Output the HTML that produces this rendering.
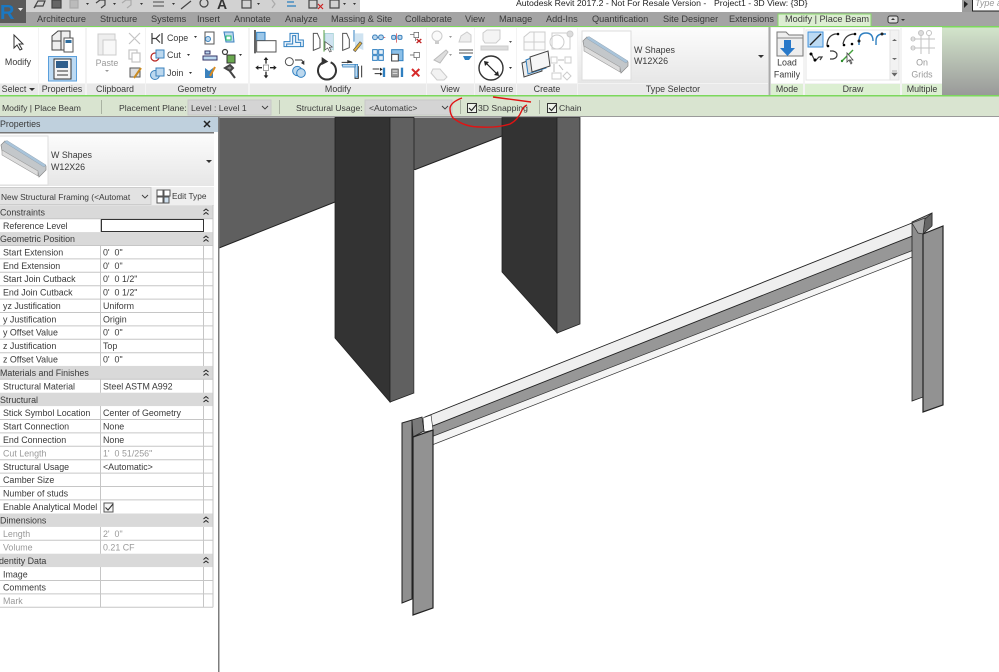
<!DOCTYPE html>
<html><head><meta charset="utf-8"><title>Revit</title>
<style>
html,body{margin:0;padding:0;background:#fff;width:999px;height:672px;overflow:hidden}
svg{display:block;filter:blur(.3px)}
text{font-family:"Liberation Sans",sans-serif;font-size:8.9px;fill:#3a3a3a;white-space:pre}
.tabs text{font-size:9.2px}
.opt text{font-size:8.65px}
.g{fill:#9a9a9a}.m{text-anchor:middle}
.i{fill:none;stroke:#3c3c3c;stroke-width:1.2}
.b{fill:none;stroke:#2f7fc0;stroke-width:1.4}
.f{fill:#bcd8ee;stroke:#3b82bd;stroke-width:1}
.l{fill:none;stroke:#c4c4c4;stroke-width:1.2}
</style></head><body>
<svg width="999" height="672" viewBox="0 0 999 672" xmlns="http://www.w3.org/2000/svg">
<defs>
<linearGradient id="rg" x1="0" y1="0" x2="0" y2="1"><stop offset="0" stop-color="#d4e6cc"/><stop offset="1" stop-color="#989898"/></linearGradient>
<linearGradient id="sel" x1="0" y1="0" x2="0" y2="1"><stop offset="0" stop-color="#fcfcfc"/><stop offset="1" stop-color="#e6e6e6"/></linearGradient>
<g id="beam">
<path d="M1 6 L5 2 L46 27 L46 31 L39 38 L38 33 L2 12 Z" fill="#c3c7ca" stroke="#888" stroke-width=".7"/>
<path d="M4 3 L7 1.500 L46 26 L44 28 Z" fill="#a9c4da" stroke="#8a9aa8" stroke-width=".4"/>
<path d="M2 11 L38 32 L38 37 L2 16 Z" fill="#dcdcdc" stroke="#999" stroke-width=".6"/>
</g>
</defs>

<!-- top bar -->
<rect width="999" height="12" fill="#d2d2d2"/>
<rect x="360" width="602" height="12" fill="#fff"/>
<rect x="962" width="37" height="12" fill="#9c9c9c"/>
<rect x="972.500" y="-1" width="30" height="12" fill="#fff" stroke="#222"/>
<path d="M964 1 L968 4 L964 8 Z" fill="#222"/>
<text x="975" y="6" style="font-size:9px;font-style:italic" class="g">Type a</text>
<text x="516" y="6" style="font-size:8.7px;fill:#222">Autodesk Revit 2017.2 - Not For Resale Version -</text>
<text x="714" y="6" style="font-size:8.7px;fill:#222">Project1 - 3D View: {3D}</text>
<!-- QAT icons -->
<g fill="none" stroke="#444" stroke-width="1.2">
<path d="M34 8 L38 1 H45 L43 6 H36Z"/><rect x="52" y="0" width="9" height="8" fill="#666"/>
<path d="M70 0 h8 v8 h-8z" stroke="#aaa" fill="#bbb"/><path d="M96 3 l4 -3 h5 v5 l-4 3" />
<path d="M122 3 l4 -3 h5 v5 l-4 3" stroke="#aaa"/><path d="M153 2 h11 M153 6 h11" stroke="#777" stroke-width="1.6"/>
<path d="M181 9 L191 1" /><circle cx="204" cy="3" r="4"/>
<rect x="242" y="0" width="9" height="8"/><path d="M272 0 l3 4 -3 4" stroke="#aaa"/>
<path d="M287 2 h7 M287 6 h9" stroke="#2a7fc0"/><path d="M309 0 h8 v8 h-8z" /><path d="M318 4 l5 5 M323 4 l-5 5" stroke="#c22"/><rect x="330" y="0" width="9" height="8" />
</g>
<text x="217" y="9" style="font-size:14px;font-weight:bold;fill:#333">A</text>
<path d="M86 3h3l-1.500 2z M113 3h3l-1.500 2z M140 3h3l-1.500 2z M172 3h3l-1.500 2z M257 3h3l-1.500 2z M343 3h3l-1.500 2z M353 3h3l-1.500 2z" fill="#333"/>

<!-- tabs -->
<rect y="12" width="999" height="14" fill="#a4a4a4"/>
<rect x="0" y="0" width="26" height="23" fill="#5a5a5a"/>
<text x="0" y="19" style="font-size:20px;font-weight:bold;fill:#1a78c2">R</text>
<path d="M18 8h5l-2.500 3z" fill="#eee"/>
<g class="tabs">
<text x="37" y="22">Architecture</text>
<text x="100" y="22">Structure</text><text x="151" y="22">Systems</text><text x="197" y="22">Insert</text>
<text x="234" y="22">Annotate</text><text x="285" y="22">Analyze</text><text x="331" y="22">Massing &amp; Site</text>
<text x="405" y="22">Collaborate</text><text x="465" y="22">View</text><text x="499" y="22">Manage</text>
<text x="546" y="22">Add-Ins</text><text x="592" y="22">Quantification</text><text x="663" y="22">Site Designer</text>
<text x="729" y="22">Extensions</text>
<path d="M778 27 V14 H871 V27" fill="#dcedd2" stroke="#86d868" stroke-width="1"/>
<text x="785" y="22">Modify | Place Beam</text>
</g>
<rect x="888" y="16" width="10" height="7" rx="2" fill="#ddd" stroke="#333"/><path d="M891 20h4l-2 -2z" fill="#333"/><path d="M901 19h4l-2 2z" fill="#333"/>

<!-- ribbon -->
<rect y="26" width="999" height="70" fill="url(#rg)"/>
<rect y="26" width="999" height="1.500" fill="#7cd85c"/>
<rect y="27" width="942" height="68" fill="#f3f3f3"/>
<g fill="#fff">
<rect x="0" y="28" width="38" height="55"/><rect x="39" y="28" width="46" height="55"/><rect x="87" y="28" width="58" height="55"/><rect x="146" y="28" width="102" height="55"/><rect x="250" y="28" width="176" height="55"/><rect x="427" y="28" width="47" height="55"/><rect x="475" y="28" width="41" height="55"/><rect x="517" y="28" width="60" height="55"/><rect x="578" y="28" width="190" height="55"/><rect x="771" y="28" width="32" height="55"/><rect x="805" y="28" width="95" height="55"/><rect x="902" y="28" width="40" height="55"/>
</g>
<g fill="#e9e9e9">
<rect x="0" y="84" width="38" height="11"/><rect x="39" y="84" width="46" height="11"/><rect x="87" y="84" width="58" height="11"/><rect x="146" y="84" width="102" height="11"/><rect x="250" y="84" width="176" height="11"/><rect x="427" y="84" width="47" height="11"/><rect x="475" y="84" width="41" height="11"/><rect x="517" y="84" width="60" height="11"/><rect x="578" y="84" width="190" height="11"/>
</g>
<g fill="#dcefd2"><rect x="771" y="84" width="32" height="11"/><rect x="805" y="84" width="95" height="11"/><rect x="902" y="84" width="40" height="11"/></g>
<rect x="768.500" y="27" width="2" height="68" fill="#aaa"/>
<rect y="95" width="999" height="1.500" fill="#7cd85c"/>
<g>
<text x="14" y="92" text-anchor="middle">Select</text><path d="M29 88h6l-3 3z" fill="#333"/>
<text x="62" y="92" text-anchor="middle">Properties</text><text x="115" y="92" text-anchor="middle">Clipboard</text>
<text x="197" y="92" text-anchor="middle">Geometry</text><text x="338" y="92" text-anchor="middle">Modify</text>
<text x="450" y="92" text-anchor="middle">View</text><text x="496" y="92" text-anchor="middle">Measure</text>
<text x="547" y="92" text-anchor="middle">Create</text><text x="673" y="92" text-anchor="middle">Type Selector</text>
<text x="787" y="92" text-anchor="middle">Mode</text><text x="853" y="92" text-anchor="middle">Draw</text><text x="922" y="92" text-anchor="middle">Multiple</text>
</g>

<!-- select / properties / clipboard -->
<path d="M14 35 V48 L17 45 L20 50 L22 49 L19 44 L23 44 Z" fill="#fff" stroke="#333"/>
<text x="18" y="65" text-anchor="middle">Modify</text>
<path d="M52 36 L58 31 H70 V50 H52Z" fill="#eee" stroke="#444"/><path d="M61 31 V50 M52 41 H61" stroke="#444" fill="none"/>
<rect x="64" y="38" width="9" height="14" fill="#fff" stroke="#555"/><rect x="65.500" y="40" width="6" height="3" fill="#2f6d9e"/>
<rect x="48.500" y="56.500" width="28" height="24.500" fill="#bcdaf3" stroke="#5a9fdc"/>
<rect x="54" y="59" width="17" height="20" fill="#f4f4f4" stroke="#333"/><rect x="56" y="61" width="12" height="7" fill="#305f8c"/>
<path d="M57 71h11M57 75h11" stroke="#333"/>
<rect x="98" y="34" width="17" height="21" fill="#eee" stroke="#ccc"/><rect x="103" y="40" width="13" height="15" fill="#f8f8f8" stroke="#ccc"/>
<text x="107" y="66" text-anchor="middle" class="g">Paste</text><path d="M105 70h4l-2 2z" fill="#999"/>
<path d="M129 33l11 11M140 33l-11 11" class="l"/><rect x="129" y="50" width="8" height="9" class="l"/><rect x="132" y="53" width="8" height="9" class="l" style="fill:#fff"/>
<rect x="130" y="68" width="10" height="9" fill="#ddd" stroke="#555"/><path d="M134 78 L141 68" stroke="#c98b21" stroke-width="2"/>

<!-- geometry -->
<path d="M152 33v11M162 33v11M152 38.500h4l4 -4M152 38.500h4l4 4" class="i"/>
<circle cx="155" cy="57" r="4" fill="#fff" stroke="#b8231f" stroke-width="1.2"/><rect x="156" y="50" width="8" height="8" class="f"/>
<circle cx="155" cy="75" r="4.500" class="f"/><rect x="156" y="68" width="8" height="8" class="f"/>
<text x="167" y="41">Cope</text><path d="M194 36h3l-1.500 2z" fill="#333"/>
<text x="167" y="58">Cut</text><path d="M187 54h3l-1.500 2z" fill="#333"/>
<text x="167" y="76">Join</text><path d="M189 72h3l-1.500 2z" fill="#333"/>
<rect x="205" y="32" width="9" height="12" fill="#fff" stroke="#555"/><circle cx="208" cy="39" r="2.500" class="f"/>
<path d="M224 32h9l1 10h-8z" class="f"/><rect x="226" y="36" width="5" height="4" fill="#fff" stroke="#2b6"/>
<path d="M205 51h5v3h-5zM203 56h14v4h-14z" fill="#bcd8ee" stroke="#336"/>
<circle cx="225" cy="52" r="2.500" class="i"/><rect x="227" y="55" width="8" height="8" fill="#6aa84f" stroke="#333"/><path d="M239 54h3l-1.500 2z" fill="#333"/>
<path d="M205 78V68l4 3 4 -3v10z" fill="#3b82bd"/><path d="M210 76L215 67" stroke="#d98b20" stroke-width="2"/>
<path d="M225 68l5 -3 3 3 -3 3zM229 70l6 8" stroke="#444" stroke-width="2" fill="#888"/>

<!-- modify -->
<g transform="translate(240 25) scale(.3333)">
<path d="M45 15V85" stroke="#444" stroke-width="5"/><rect x="50" y="22" width="25" height="25" fill="#9cc7e8" stroke="#2f7fc0" stroke-width="3"/><rect x="50" y="47" width="58" height="34" fill="#fff" stroke="#555" stroke-width="3"/>
<path d="M132 65 V50 H150 V25 H175 V45 H190 V65Z M140 65V57H158V32H167V52H182V65" fill="#eef5fb" stroke="#2f7fc0" stroke-width="3"/>
<path d="M220 25h12l8 18v25l-20 8z" fill="#fff" stroke="#555" stroke-width="3"/><path d="M252 15V80" stroke="#5aa04a" stroke-width="3"/><path d="M255 25l25 0v50l-25 -10z" fill="#cfe3f1" stroke="#9cc" stroke-width="2"/><path d="M255 50v25l8 -6 6 12 5 -2 -6 -12 9 -1z" fill="#fff" stroke="#444" stroke-width="2"/>
<path d="M308 25h12l8 18v25l-20 8z" fill="#fff" stroke="#555" stroke-width="3"/><path d="M342 15V50" stroke="#2f7fc0" stroke-width="3"/><path d="M345 25l25 0v50l-25 -10z" fill="#cfe3f1"/><path d="M340 75l20 -25 6 5 -20 25z" fill="#e3b23c" stroke="#555" stroke-width="2"/>
<path d="M78 100v16M78 140v16M50 128h16M90 128h16" stroke="#222" stroke-width="4"/><path d="M78 96l-7 9h14zM78 160l-7 -9h14zM46 128l9 -7v14zM110 128l-9 -7v14z" fill="#222"/><rect x="70" y="120" width="16" height="16" fill="#fff" stroke="#777" stroke-width="2"/>
<circle cx="148" cy="110" r="12" fill="#fff" stroke="#555" stroke-width="3"/><circle cx="172" cy="138" r="14" fill="#bcd8ee" stroke="#2f7fc0" stroke-width="3"/><circle cx="183" cy="144" r="13" fill="#bcd8ee" stroke="#2f7fc0" stroke-width="3"/><path d="M165 105h20l6 8" fill="none" stroke="#333" stroke-width="3"/><path d="M193 106v14l-10 -6z" fill="#333"/>
<path d="M250 112 A27 27 0 1 0 272 112" fill="none" stroke="#333" stroke-width="6"/><path d="M245 96l20 14 -20 10z" fill="#333"/>
<path d="M305 112h32M305 120h40M345 125h10v35h-10zM365 122v35" fill="none" stroke="#333" stroke-width="3"/><path d="M322 105l15 5 -15 5z" fill="#333"/><path d="M308 118h38v8h-38zM345 118h8v38h-8z" fill="#bcd8ee" stroke="#2f7fc0" stroke-width="2"/>
<path d="M396 38h40" stroke="#c33" stroke-width="2"/><rect x="398" y="30" width="14" height="14" rx="6" class="f" style="stroke-width:3"/><rect x="416" y="30" width="14" height="14" rx="6" class="f" style="stroke-width:3"/>
<path d="M470 25v28" stroke="#c33" stroke-width="2"/><rect x="455" y="31" width="12" height="12" rx="4" class="f" style="stroke-width:3"/><rect x="474" y="31" width="12" height="12" rx="4" class="f" style="stroke-width:3"/>
<rect x="522" y="22" width="14" height="16" fill="#fff" stroke="#555" stroke-width="2"/><path d="M510 28h12M527 38v10" stroke="#555" stroke-width="2"/><path d="M530 42l14 12M544 42l-14 12" stroke="#c02222" stroke-width="4"/>
<path d="M398 74h14v14h-14zM416 74h14v14h-14zM398 92h14v14h-14zM416 92h14v14h-14z" fill="#e6f0f8" stroke="#2f7fc0" stroke-width="3"/>
<rect x="455" y="74" width="34" height="33" fill="#8cc0e8" stroke="#2f7fc0" stroke-width="3"/><rect x="455" y="88" width="20" height="20" fill="#fff" stroke="#444" stroke-width="3"/>
<rect x="522" y="82" width="16" height="16" fill="#fff" stroke="#555" stroke-width="2"/><path d="M510 90h12M530 98v8" stroke="#555" stroke-width="2"/>
<path d="M398 132h20M404 146h16" stroke="#333" stroke-width="3"/><path d="M432 128v28" stroke="#2f7fc0" stroke-width="7"/><path d="M420 128l8 5 -8 5zM420 142l8 5 -8 5z" fill="#222"/>
<rect x="455" y="132" width="20" height="24" fill="#999" stroke="#444" stroke-width="2"/><path d="M458 138h14M458 146h14" stroke="#fff" stroke-width="2"/><path d="M486 128v28" stroke="#2f7fc0" stroke-width="7"/>
<path d="M516 132l22 22M538 132l-22 22" stroke="#d62a2a" stroke-width="6"/>
</g>

<!-- view -->
<circle cx="437" cy="36" r="5" fill="#fafafa" stroke="#ccc"/><rect x="435" y="41" width="4" height="3" fill="#ccc"/><path d="M449 36h3l-1.500 2z" fill="#999"/>
<path d="M459 42l2 -6 6 -4 4 3v7h-10z" fill="#eee" stroke="#ccc"/>
<path d="M434 60L446 50l2 2 -8 11z" fill="#ddd" stroke="#bbb"/><path d="M449 54h3l-1.500 2z" fill="#999"/>
<path d="M459 50h14M459 53h14" stroke="#555"/><path d="M463 56h9l-3 4h-4z" fill="#2f7fc0"/>
<path d="M433 69h7l7 8 -3 3h-7l-6 -7z" fill="#f2f2f2" stroke="#ccc"/>
<!-- measure -->
<path d="M483 40V33l4 -3h13v9l-4 4h-11z" fill="#f4f4f4" stroke="#ccc"/><rect x="481" y="46" width="27" height="4" fill="#ddd" stroke="#ccc"/><path d="M509 41h3l-1.500 2z" fill="#555"/>
<circle cx="491" cy="68" r="12" fill="#fff" stroke="#333" stroke-width="1.400"/><path d="M485 62l13 13" stroke="#222" stroke-width="1.200"/><path d="M484 61l5 1 -4 4zM499 76l-5 -1 4 -4z" fill="#222"/><path d="M509 67h3l-1.500 2z" fill="#333"/>
<!-- create -->
<path d="M524 37l6 -5h15v18h-21z" fill="#fbfbfb" stroke="#ccc"/><path d="M534 32v18M524 42h21" stroke="#ccc"/>
<circle cx="557" cy="42" r="7" fill="#fff" stroke="#ccc"/><path d="M552 33h18v16h-18z" fill="none" stroke="#ccc"/><circle cx="570" cy="34" r="3" fill="#ddd" stroke="#ccc"/>
<path d="M522 63l18 -7 2 15 -18 6z" fill="#eee" stroke="#444"/><path d="M526 60l18 -7 2 15 -18 6z" fill="#ddd" stroke="#2f7fc0"/><path d="M530 57l18 -6 2 15 -18 6z" fill="#f6f6f6" stroke="#444"/>
<g fill="#fff" stroke="#ccc"><rect x="551" y="57" width="6" height="6"/><rect x="565" y="57" width="6" height="6"/><rect x="552" y="73" width="9" height="6"/><path d="M567 72l4 4 -4 4 -4 -4z"/></g><path d="M558 60h6M554 64v8M559 65l4 5" stroke="#bbb"/>
<!-- type selector -->
<rect x="578" y="28" width="190" height="55" fill="url(#sel)"/>
<rect x="582" y="31" width="49" height="49" fill="#fff" stroke="#ddd"/>
<use href="#beam" x="582" y="35"/>
<text x="634" y="53">W Shapes</text><text x="634" y="64">W12X26</text>
<path d="M758 55h6l-3 3z" fill="#333"/>
<!-- mode -->
<path d="M777 32h9l3 3h14v21h-26z" fill="#eee" stroke="#777"/><path d="M777 38h26" stroke="#888"/>
<path d="M784 40h7v8h4l-7.500 8 -7.500 -8h4z" fill="#2979c9"/>
<text x="787" y="65.500" text-anchor="middle">Load</text><text x="787" y="77.500" text-anchor="middle">Family</text>
<!-- draw -->
<rect x="806" y="30" width="92" height="50" fill="#fff" stroke="#e4e4e4"/>
<rect x="808" y="32" width="15" height="15" fill="#bcdaf3" stroke="#3e8fd8"/><path d="M810 45L821 34" stroke="#222" stroke-width="1.300"/>
<path d="M827 46q0 -10 8 -12h4" class="i"/><circle cx="828" cy="46" r="1.300"/><circle cx="838" cy="34" r="1.300"/>
<path d="M843 44q2 -10 12 -10" class="i"/><circle cx="844" cy="45" r="1.300"/><circle cx="855" cy="34" r="1.300"/><circle cx="852" cy="44" r="1.300"/>
<path d="M859 45v-4q0 -8 7 -8t7 8" class="b"/><circle cx="859" cy="41" r="1.500" fill="#222"/>
<path d="M876 45v-4q0 -7 7 -7h3" class="b"/><circle cx="882" cy="34" r="1.500" fill="#222"/>
<path d="M811 53l4 8 4 -4 3 0 -2 3" class="i"/><circle cx="811" cy="54" r="1.500"/><circle cx="815" cy="60" r="1.500"/>
<path d="M830 51h3q4 1 4 4t-4 4h-3" class="i"/>
<path d="M842 61L853 50" stroke="#41a03a" stroke-width="1.400"/><circle cx="842" cy="61" r="1.200" fill="#2a8a2a"/><path d="M847 53v9l2 -2 2 4 1 -1 -2 -3 3 0z" fill="#fff" stroke="#444" stroke-width=".8"/>
<rect x="890" y="30" width="9" height="50" fill="#f2f2f2" stroke="#e2e2e2"/><path d="M892 41h5l-2.500 -2z M892 58h5l-2.500 2z" fill="#666"/><path d="M892 73h5l-2.500 3zM892 71h5" fill="#666" stroke="#666" stroke-width=".6"/>
<!-- multiple -->
<g stroke="#c2c2c2" fill="none"><path d="M911 39h24M911 48h24M921 36v18M929 36v18"/><circle cx="921" cy="33" r="2.500" fill="#ddd"/><circle cx="929" cy="33" r="2.500"/><circle cx="913" cy="39" r="2"/><circle cx="913" cy="48" r="2"/></g>
<text x="922" y="65.500" text-anchor="middle" class="g">On</text><text x="922" y="77.500" text-anchor="middle" class="g">Grids</text>

<!-- options bar -->
<rect y="96.500" width="999" height="20.500" fill="#d9e4d0"/>
<rect y="116" width="999" height="1.500" fill="#9a9a9a"/>
<g class="opt">
<text x="2" y="111">Modify | Place Beam</text>
<path d="M101.500 100v14M279.500 100v14M460.500 100v14M539.500 100v14" stroke="#a9b2a2"/>
<text x="119" y="111">Placement Plane:</text>
<rect x="188" y="100" width="83" height="15" fill="#d4d4d4" stroke="#c8c8c8"/><text x="191" y="111">Level : Level 1</text><path d="M262 106l3 3 3 -3" fill="none" stroke="#3c3c3c" stroke-width=".9"/>
<text x="296" y="111">Structural Usage:</text>
<rect x="365" y="100" width="87" height="15" fill="#d4d4d4" stroke="#c8c8c8"/><text x="369" y="111">&lt;Automatic&gt;</text><path d="M442 106l3 3 3 -3" fill="none" stroke="#3c3c3c" stroke-width=".9"/>
<rect x="467.500" y="103.500" width="9" height="9" fill="#eef2ea" stroke="#333"/><path d="M469 108l2.500 2.500 5 -6" fill="none" stroke="#222" stroke-width="1.100"/>
<text x="478" y="111">3D Snapping</text>
<rect x="547.500" y="103.500" width="9" height="9" fill="#eef2ea" stroke="#333"/><path d="M549 108l2.500 2.500 5 -6" fill="none" stroke="#222" stroke-width="1.100"/>
<text x="559" y="111">Chain</text>
</g>

<!-- 3D view -->
<rect x="219" y="117" width="780" height="555" fill="#fff"/>
<path d="M219 117.500H502V136L414 170 V117 H335 V202 L219 248Z" fill="#5f5f5f"/>
<path d="M219 248L335 202M414 170L502 136" stroke="#222" stroke-width="1" fill="none"/>
<path d="M335 117.500H390V402L335 338Z" fill="#333" stroke="#222" stroke-width=".8"/>
<path d="M390 117.500H414V393L390 402Z" fill="#606060" stroke="#222" stroke-width=".8"/>
<path d="M502 117.500H557V333L502 272Z" fill="#333" stroke="#222" stroke-width=".8"/>
<path d="M557 117.500H580V324L557 333Z" fill="#606060" stroke="#222" stroke-width=".8"/>
<path d="M414.500 170V393" stroke="#ccc"/>

<!-- beam -->
<path d="M430 427L918 233L919 248L433 438Z" fill="#979797" stroke="#333" stroke-width=".7"/>
<path d="M425 417L912 223L920 233L430 427Z" fill="#efefef" stroke="#222" stroke-width=".9"/>
<path d="M431 437L919 248L920 254L432 445Z" fill="#f4f4f4" stroke="#333" stroke-width=".7"/>
<!-- left column -->
<path d="M423 418L431 415L433 430L424 432Z" fill="#fff" stroke="#222" stroke-width=".6"/>
<path d="M402 423L412 420V599L402 603Z" fill="#8f8f8f" stroke="#222" stroke-width="1"/>
<path d="M412 420L422 417L424 431L413 437Z" fill="#7a7a7a" stroke="#222" stroke-width=".8"/>
<path d="M413 437L433 430V608L413 615Z" fill="#929292" stroke="#222" stroke-width="1.200"/>
<!-- right column -->
<path d="M912 222L932 213V225L923 234V397L912 401Z" fill="#8d8d8d" stroke="#222" stroke-width=".8"/>
<path d="M923 234L925 219L932 213V226Z" fill="#666" stroke="#222" stroke-width=".7"/>
<path d="M912 223L925 218L923 234L918 233Z" fill="#a8a8a8" stroke="#333" stroke-width=".7"/>
<path d="M923 234L943 226V405L923 412Z" fill="#929292" stroke="#222" stroke-width="1.200"/>

<!-- red ellipse -->
<path d="M493 97L531 102M462 98Q451 102 450 108Q450 117 456 120Q466 127 480 127Q497 128 510 124Q518 120 522 110Q524 106 527 105" fill="none" stroke="#e01313" stroke-width="1.400"/>

<!-- properties panel -->
<rect y="117" width="218" height="555" fill="#fff"/>
<rect x="218" y="117" width="1.500" height="555" fill="#7d7d7d"/>
<rect y="117" width="218" height="15" fill="#bfd0dd"/>
<rect y="132" width="214" height="1.500" fill="#777"/>
<text x="0" y="127">Properties</text>
<path d="M204 121l6 6M210 121l-6 6" stroke="#222" stroke-width="1.500"/>
<rect y="134" width="214" height="52" fill="url(#sel)"/>
<rect x="-1" y="136" width="49" height="49" fill="#fff" stroke="#ddd"/>
<use href="#beam" x="0" y="139" />
<text x="51" y="158">W Shapes</text><text x="51" y="170">W12X26</text>
<path d="M206 160h6l-3 3z" fill="#333"/>
<rect y="187" width="214" height="19" fill="#efefef"/>
<rect x="-1" y="187.500" width="152" height="17" fill="#e2e2e2" stroke="#ccc"/>
<text x="1" y="200" style="font-size:8.4px">New Structural Framing (&lt;Automat</text><path d="M142 195l3 3 3 -3" fill="none" stroke="#3c3c3c" stroke-width=".9"/>
<g fill="#fff" stroke="#555"><rect x="157" y="190" width="6" height="6"/><rect x="164" y="190" width="6" height="6"/><rect x="157" y="197" width="6" height="6"/><rect x="164" y="197" width="5" height="6" fill="#cfe0ee"/></g>
<text x="172" y="199" style="font-size:8.3px">Edit Type</text>

<!-- table -->
<g fill="#d9d9d9">
<rect y="205.300" width="213" height="13.400"/><rect y="232.100" width="213" height="13.400"/><rect y="365.900" width="213" height="13.400"/><rect y="392.700" width="213" height="13.400"/><rect y="513.500" width="213" height="13.400"/><rect y="553.700" width="213" height="13.400"/>
</g>
<g stroke="#c6c6c6" stroke-width="1">
<path d="M0 218.700H213M0 245.500H213M0 258.900H213M0 272.300H213M0 285.700H213M0 299.100H213M0 312.500H213M0 325.900H213M0 339.300H213M0 352.700H213M0 379.300H213M0 419.500H213M0 432.900H213M0 446.300H213M0 459.700H213M0 473.100H213M0 486.500H213M0 499.900H213M0 540.300H213M0 580.500H213M0 593.900H213M0 607.300H213"/>
<path d="M100.500 218.700V232M100.500 245.500V366M100.500 379.300V392.700M100.500 406V513.500M100.500 527V553.700M100.500 567V607.300"/>
<path d="M203.500 218.700V232M203.500 245.500V366M203.500 379.300V392.700M203.500 406V513.500M203.500 527V553.700M203.500 567V607.300"/>
<path d="M213 205V607.300"/>
</g>
<rect x="101.500" y="219.500" width="102" height="12" fill="#fff" stroke="#333"/>
<g>
<text x="0" y="215.500">Constraints</text><text x="3" y="229">Reference Level</text>
<text x="0" y="242">Geometric Position</text>
<text x="3" y="255.500">Start Extension</text><text x="103" y="255.500">0'  0"</text>
<text x="3" y="269">End Extension</text><text x="103" y="269">0'  0"</text>
<text x="3" y="282">Start Join Cutback</text><text x="103" y="282">0'  0 1/2"</text>
<text x="3" y="295.500">End Join Cutback</text><text x="103" y="295.500">0'  0 1/2"</text>
<text x="3" y="309">yz Justification</text><text x="103" y="309">Uniform</text>
<text x="3" y="322.500">y Justification</text><text x="103" y="322.500">Origin</text>
<text x="3" y="335.500">y Offset Value</text><text x="103" y="335.500">0'  0"</text>
<text x="3" y="349">z Justification</text><text x="103" y="349">Top</text>
<text x="3" y="362.500">z Offset Value</text><text x="103" y="362.500">0'  0"</text>
<text x="0" y="376">Materials and Finishes</text>
<text x="3" y="389.500">Structural Material</text><text x="103" y="389.500">Steel ASTM A992</text>
<text x="0" y="403">Structural</text>
<text x="3" y="416">Stick Symbol Location</text><text x="103" y="416">Center of Geometry</text>
<text x="3" y="429.500">Start Connection</text><text x="103" y="429.500">None</text>
<text x="3" y="443">End Connection</text><text x="103" y="443">None</text>
<text x="3" y="456.500" class="g">Cut Length</text><text x="103" y="456.500" class="g">1'  0 51/256"</text>
<text x="3" y="470">Structural Usage</text><text x="103" y="470">&lt;Automatic&gt;</text>
<text x="3" y="483">Camber Size</text>
<text x="3" y="496.500">Number of studs</text>
<text x="3" y="510">Enable Analytical Model</text>
<rect x="104" y="503" width="9" height="9" fill="#f6f6f6" stroke="#555"/><path d="M105.500 507.500l2.500 2.500 5 -6" fill="none" stroke="#333" stroke-width="1.100"/>
<text x="0" y="523.500">Dimensions</text>
<text x="3" y="537" class="g">Length</text><text x="103" y="537" class="g">2'  0"</text>
<text x="3" y="550.500" class="g">Volume</text><text x="103" y="550.500" class="g">0.21 CF</text>
<text x="-1" y="564">dentity Data</text>
<text x="3" y="577.500">Image</text><text x="3" y="590.500">Comments</text><text x="3" y="604" class="g">Mark</text>
</g>
<g fill="none" stroke="#222" stroke-width="1">
<path d="M203.500 211l2.500 -2 2.500 2M203.500 214.500l2.500 -2 2.500 2"/>
<path d="M203.500 238l2.500 -2 2.500 2M203.500 241.500l2.500 -2 2.500 2"/>
<path d="M203.500 372l2.500 -2 2.500 2M203.500 375.500l2.500 -2 2.500 2"/>
<path d="M203.500 398.500l2.500 -2 2.500 2M203.500 402l2.500 -2 2.500 2"/>
<path d="M203.500 519l2.500 -2 2.500 2M203.500 522.500l2.500 -2 2.500 2"/>
<path d="M203.500 559.500l2.500 -2 2.500 2M203.500 563l2.500 -2 2.500 2"/>
</g>
</svg>
</body></html>
